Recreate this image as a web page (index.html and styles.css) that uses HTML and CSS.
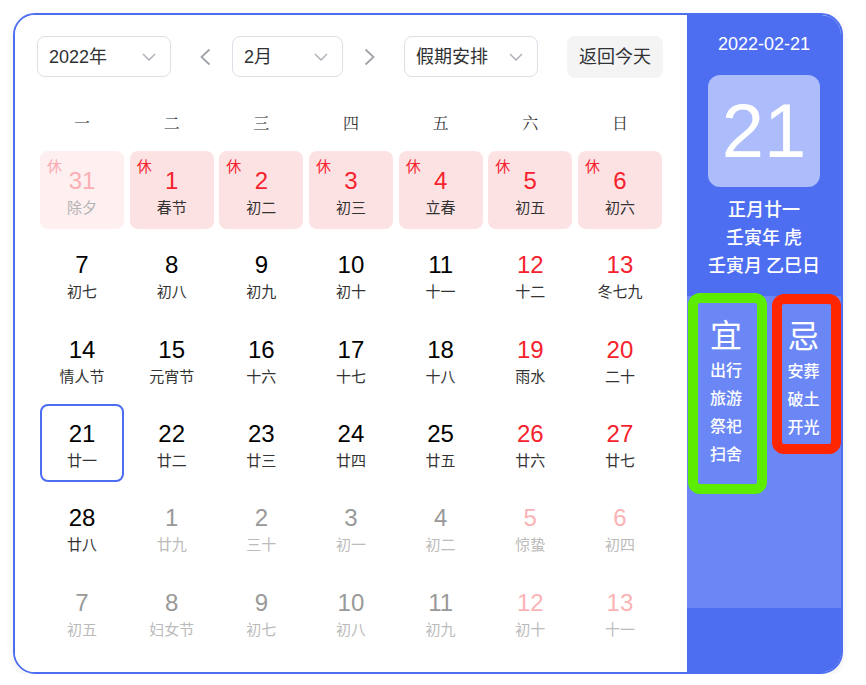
FILE: index.html
```html
<!DOCTYPE html>
<html lang="zh-CN">
<head>
<meta charset="utf-8">
<title>万年历</title>
<link rel="stylesheet" href="styles.css">
</head>
<body>
<div class="card">
  <div class="main">
    <div class="toolbar">
      <div class="select w-year"><span>2022年</span><svg class="chev" width="14" height="8" viewBox="0 0 14 8"><polyline points="1,1 7,7 13,1" fill="none" stroke="#a8abb2" stroke-width="1.3"/></svg></div>
      <span class="arrow arrow-l"><svg width="12" height="18" viewBox="0 0 12 18"><polyline points="10.5,1.5 2.5,9 10.5,16.5" fill="none" stroke="#a0a3aa" stroke-width="1.8"/></svg></span>
      <div class="select w-month"><span>2月</span><svg class="chev" width="14" height="8" viewBox="0 0 14 8"><polyline points="1,1 7,7 13,1" fill="none" stroke="#a8abb2" stroke-width="1.3"/></svg></div>
      <span class="arrow arrow-r"><svg width="12" height="18" viewBox="0 0 12 18"><polyline points="1.5,1.5 9.5,9 1.5,16.5" fill="none" stroke="#a0a3aa" stroke-width="1.8"/></svg></span>
      <div class="select w-hol"><span>假期安排</span><svg class="chev" width="14" height="8" viewBox="0 0 14 8"><polyline points="1,1 7,7 13,1" fill="none" stroke="#a8abb2" stroke-width="1.3"/></svg></div>
      <div class="btn">返回今天</div>
    </div>
    <div class="weekdays">
      <span>一</span><span>二</span><span>三</span><span>四</span><span>五</span><span>六</span><span>日</span>
    </div>
    <div class="grid">
      <div class="cell hol prev"><span class="xiu">休</span><div class="num">31</div><div class="lun">除夕</div></div>
      <div class="cell hol"><span class="xiu">休</span><div class="num">1</div><div class="lun">春节</div></div>
      <div class="cell hol"><span class="xiu">休</span><div class="num">2</div><div class="lun">初二</div></div>
      <div class="cell hol"><span class="xiu">休</span><div class="num">3</div><div class="lun">初三</div></div>
      <div class="cell hol"><span class="xiu">休</span><div class="num">4</div><div class="lun">立春</div></div>
      <div class="cell hol"><span class="xiu">休</span><div class="num">5</div><div class="lun">初五</div></div>
      <div class="cell hol"><span class="xiu">休</span><div class="num">6</div><div class="lun">初六</div></div>

      <div class="cell"><div class="num">7</div><div class="lun">初七</div></div>
      <div class="cell"><div class="num">8</div><div class="lun">初八</div></div>
      <div class="cell"><div class="num">9</div><div class="lun">初九</div></div>
      <div class="cell"><div class="num">10</div><div class="lun">初十</div></div>
      <div class="cell"><div class="num">11</div><div class="lun">十一</div></div>
      <div class="cell wk"><div class="num">12</div><div class="lun">十二</div></div>
      <div class="cell wk"><div class="num">13</div><div class="lun">冬七九</div></div>

      <div class="cell"><div class="num">14</div><div class="lun">情人节</div></div>
      <div class="cell"><div class="num">15</div><div class="lun">元宵节</div></div>
      <div class="cell"><div class="num">16</div><div class="lun">十六</div></div>
      <div class="cell"><div class="num">17</div><div class="lun">十七</div></div>
      <div class="cell"><div class="num">18</div><div class="lun">十八</div></div>
      <div class="cell wk"><div class="num">19</div><div class="lun">雨水</div></div>
      <div class="cell wk"><div class="num">20</div><div class="lun">二十</div></div>

      <div class="cell sel"><div class="num">21</div><div class="lun">廿一</div></div>
      <div class="cell"><div class="num">22</div><div class="lun">廿二</div></div>
      <div class="cell"><div class="num">23</div><div class="lun">廿三</div></div>
      <div class="cell"><div class="num">24</div><div class="lun">廿四</div></div>
      <div class="cell"><div class="num">25</div><div class="lun">廿五</div></div>
      <div class="cell wk"><div class="num">26</div><div class="lun">廿六</div></div>
      <div class="cell wk"><div class="num">27</div><div class="lun">廿七</div></div>

      <div class="cell"><div class="num">28</div><div class="lun">廿八</div></div>
      <div class="cell next"><div class="num">1</div><div class="lun">廿九</div></div>
      <div class="cell next"><div class="num">2</div><div class="lun">三十</div></div>
      <div class="cell next"><div class="num">3</div><div class="lun">初一</div></div>
      <div class="cell next"><div class="num">4</div><div class="lun">初二</div></div>
      <div class="cell next wk"><div class="num">5</div><div class="lun">惊蛰</div></div>
      <div class="cell next wk"><div class="num">6</div><div class="lun">初四</div></div>

      <div class="cell next"><div class="num">7</div><div class="lun">初五</div></div>
      <div class="cell next"><div class="num">8</div><div class="lun">妇女节</div></div>
      <div class="cell next"><div class="num">9</div><div class="lun">初七</div></div>
      <div class="cell next"><div class="num">10</div><div class="lun">初八</div></div>
      <div class="cell next"><div class="num">11</div><div class="lun">初九</div></div>
      <div class="cell next wk"><div class="num">12</div><div class="lun">初十</div></div>
      <div class="cell next wk"><div class="num">13</div><div class="lun">十一</div></div>
    </div>
  </div>
  <div class="side">
    <div class="side-top">
      <div class="date">2022-02-21</div>
      <div class="bigday">21</div>
      <div class="lunar">
        <div>正月廿一</div>
        <div>壬寅年 虎</div>
        <div>壬寅月 乙巳日</div>
      </div>
    </div>
    <div class="side-mid">
      <div class="yj yi">
        <div class="yj-title">宜</div>
        <div>出行</div>
        <div>旅游</div>
        <div>祭祀</div>
        <div>扫舍</div>
      </div>
      <div class="yj ji">
        <div class="yj-title">忌</div>
        <div>安葬</div>
        <div>破土</div>
        <div>开光</div>
      </div>
    </div>
    <div class="side-foot"></div>
  </div>
</div>
</body>
</html>
```

FILE: styles.css
```css
body {
  margin: 0;
  background: #ffffff;
  font-family: "Liberation Sans", "Noto Sans CJK SC", sans-serif;
}

.card {
  margin: 13px 0 0 13px;
  width: 830px;
  height: 661px;
  box-sizing: border-box;
  border: 2px solid #4e6ef2;
  border-radius: 22px;
  overflow: hidden;
  display: flex;
  box-shadow: 0 2px 8px rgba(0, 0, 0, 0.08);
}

.main {
  width: 672px;
  flex: none;
  background: #ffffff;
  padding: 21px 25px 0 25px;
  box-sizing: border-box;
}

/* toolbar */
.toolbar {
  display: flex;
  align-items: center;
  height: 41px;
  margin-left: -3px;
}

.select {
  height: 41px;
  box-sizing: border-box;
  border: 1px solid #dcdfe6;
  border-radius: 8px;
  display: flex;
  align-items: center;
  justify-content: space-between;
  padding: 0 14px 0 11px;
  font-size: 18px;
  line-height: 20px;
  color: #303133;
  flex: none;
}

.chev {
  display: block;
}

.w-year { width: 134px; }
.w-month { width: 111px; margin-left: 21px; }
.w-hol { width: 134px; margin-left: 28px; }

.arrow {
  width: 12px;
  height: 18px;
  flex: none;
}
.arrow svg { display: block; }
.arrow-l { margin-left: 28px; }
.arrow-r { margin-left: 21px; }

.btn {
  margin-left: 29px;
  width: 96px;
  height: 42px;
  border-radius: 8px;
  background: #f4f4f5;
  color: #303133;
  font-size: 18px;
  line-height: 20px;
  display: flex;
  align-items: center;
  justify-content: center;
  flex: none;
}

/* weekdays */
.weekdays {
  margin-top: 26px;
  display: grid;
  grid-template-columns: repeat(7, 84px);
  column-gap: 5.67px;
  height: 40px;
  line-height: 40px;
  font-family: "Noto Serif CJK SC", "Noto Sans CJK SC", serif;
  font-size: 16px;
  color: #333333;
  text-align: center;
}

/* grid */
.grid {
  margin-top: 8px;
  display: grid;
  grid-template-columns: repeat(7, 84px);
  grid-auto-rows: 78px;
  column-gap: 5.67px;
  row-gap: 6.33px;
}

.cell {
  position: relative;
  border-radius: 8px;
  text-align: center;
  padding-top: 16px;
  box-sizing: border-box;
}

.num {
  font-size: 24px;
  line-height: 28px;
  color: #000000;
}

.lun {
  margin-top: 2px;
  font-family: "Noto Sans CJK SC", sans-serif;
  font-size: 15px;
  line-height: 20px;
  color: #333333;
}

.xiu {
  position: absolute;
  left: 7px;
  top: 5px;
  font-family: "Noto Sans CJK SC", sans-serif;
  font-size: 15px;
  line-height: 20px;
  color: #f5222d;
}

.hol { background: #fde2e4; }
.hol .num { color: #f5222d; }

.prev { background: #fef0f1; }
.prev .num { color: #f9afb3; }
.prev .lun { color: #b3b3b3; }
.prev .xiu { color: #fbaab0; }

.wk .num { color: #f5222d; }

.next .num { color: #999999; }
.next .lun { color: #bbbbbb; }
.next.wk .num { color: #fbb3b6; }

.sel {
  border: 2px solid #4e6ef2;
  padding-top: 14px;
}

/* side panel */
.side {
  width: 154px;
  flex: none;
  display: flex;
  flex-direction: column;
  background: #4e6ef2;
  color: #ffffff;
}

.side-top {
  height: 281px;
  flex: none;
  box-sizing: border-box;
  padding-top: 17px;
  display: flex;
  flex-direction: column;
  align-items: center;
}

.date {
  font-size: 18px;
  line-height: 24px;
}

.bigday {
  margin-top: 19px;
  width: 112px;
  height: 112px;
  border-radius: 12px;
  background: #adbcfa;
  font-size: 76px;
  line-height: 112px;
  text-align: center;
}

.lunar {
  margin-top: 7px;
  font-family: "Noto Sans CJK SC", sans-serif;
  font-size: 18px;
  line-height: 28px;
  font-weight: 500;
  text-align: center;
}

.side-mid {
  height: 312px;
  flex: none;
  background: #6b87f6;
  display: flex;
  align-items: flex-start;
  padding-left: 1px;
  gap: 5px;
}

.yj {
  box-sizing: border-box;
  border-radius: 12px;
  text-align: center;
  font-family: "Noto Sans CJK SC", sans-serif;
  font-size: 16px;
  line-height: 28px;
  font-weight: 500;
  padding-top: 8px;
  flex: none;
}

.yj-title {
  font-size: 32px;
  line-height: 44px;
  font-weight: 400;
}

.yi {
  margin-top: -3px;
  width: 79px;
  height: 201px;
  border: 10px solid #5cec00;
  padding-right: 3px;
}

.ji {
  margin-top: -2px;
  width: 69px;
  height: 160px;
  border: 10px solid #ff2600;
  padding-right: 6px;
}

.side-foot {
  flex: 1;
  background: #4e6ef2;
}
```
